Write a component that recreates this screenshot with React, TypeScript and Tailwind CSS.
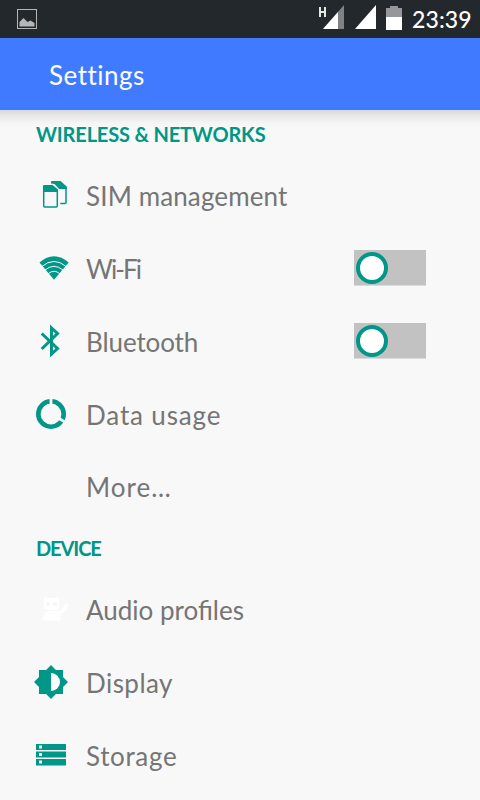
import type { ReactNode } from 'react';

function SimIcon() {
  return (
    <svg className="overflow-visible" width="32" height="36" viewBox="0 0 32 36" fill="none">
      <path d="M7.700 9V29q0 1 1 1H20.300q1 0 1-1V13" stroke="#009688" strokeWidth="1.500" />
      <path d="M7 9q0-1 1-1h8.500L22 12.500V15H7Z" fill="#009688" />
      <path d="M15 6.500V5q0-1 1-1h8.500L30.700 9.500V12h-7.500L18.500 7Z" fill="#009688" />
      <path d="M30 10V25.500q0 1-1 1H24.300" stroke="#009688" strokeWidth="1.500" />
    </svg>
  );
}

function WifiIcon() {
  return (
    <svg className="overflow-visible" width="32" height="36" viewBox="0 0 32 36">
      <path d="M3.500 12.600Q18 0 32.700 12.600L18 29.700Z" fill="#009688" />
      <path d="M5.700 16.600Q18 6.300 30.300 16.600M8.700 20.300Q18 12.300 27.300 20.300M12 23.900Q18 18.600 24 23.900" fill="none" stroke="#f8f8f8" strokeWidth="1" />
    </svg>
  );
}

function BluetoothIcon() {
  return (
    <svg className="overflow-visible" width="32" height="36" viewBox="0 0 32 36" fill="none" stroke="#009688" strokeWidth="3">
      <path d="M5.700 10.500L21.500 25.500L15.500 31V5L21.500 10.500L5.700 26" />
    </svg>
  );
}

function DataIcon() {
  return (
    <svg className="overflow-visible" width="32" height="36" viewBox="0 0 32 36" fill="none">
      <circle cx="15" cy="18" r="12.700" stroke="#009688" strokeWidth="4.600" />
      <path d="M15 18V2M15 18L30 26.500" stroke="#f8f8f8" strokeWidth="2.800" />
    </svg>
  );
}

function CatIcon() {
  return (
    <svg className="overflow-visible" width="32" height="36" viewBox="0 0 32 36">
      <path d="M9 5l3 2h7l3-2 1 4v6q0 4-4 4h-7q-4 0-4-4V9Z" fill="#fff" />
      <path d="M10 20h11q6-1 8.500-8l2.500 1q-1 8-8 11l1 5.500H6l2-5Z" fill="#fff" />
      <circle cx="12" cy="13" r="2" fill="#f6f6f6" />
      <circle cx="19" cy="13" r="2" fill="#f6f6f6" />
    </svg>
  );
}

function DisplayIcon() {
  return (
    <svg width="36" height="36" viewBox="0 0 36 36" className="-ml-0.5">
      <path d="M17 1l4.900 5H29v7.100L34 18l-5 4.900V30h-7.100L17 35l-4.900-5H5v-7.100L0 18l5-4.900V6h7.100Z" fill="#009688" />
      <path d="M17 9a9 9 0 0 1 0 18Z" fill="#fff" />
    </svg>
  );
}

function StorageIcon() {
  return (
    <svg width="32" height="36" viewBox="0 0 32 36">
      <path d="M0 7h30v6H0ZM0 14.500h30v6H0ZM0 22h30v6.500H0Z" fill="#009688" />
      <path d="M3 8.500h3v3H3ZM3 16h3v3H3ZM3 23.500h3v3H3Z" fill="#fff" />
    </svg>
  );
}

function Toggle() {
  return (
    <div className="mr-[54px] ml-auto flex h-9 w-[72px] items-start border-b border-[#dadada] bg-[#c2c2c2] pt-[2px] pl-[2px]">
      <div className="size-8 rounded-full border-4 border-[#009688] bg-white" />
    </div>
  );
}

function Row({ icon, label, className, toggle }: { icon?: ReactNode; label: string; className: string; toggle?: boolean }) {
  return (
    <div className="flex h-[73px] shrink-0 items-center pb-px pl-9">
      <div className="flex w-[50px] shrink-0">{icon}</div>
      <span className={`text-[26px] leading-8 whitespace-nowrap text-[#757575] ${className}`}>{label}</span>
      {toggle && <Toggle />}
    </div>
  );
}

function Heading({ label, className }: { label: string; className: string }) {
  return (
    <div className="flex h-[49px] shrink-0 items-center pb-px pl-9">
      <h2 className={`text-[20px] font-bold whitespace-nowrap text-[#009688] ${className}`}>{label}</h2>
    </div>
  );
}

export default function App() {
  return (
    <div className="flex h-[800px] w-[480px] flex-col overflow-hidden bg-[#f8f8f8] font-[Lato,sans-serif]">
      <div className="flex h-[38px] shrink-0 items-center bg-[#23282c] pl-[17px]">
        <svg width="20" height="20" viewBox="0 0 20 20">
          <rect x=".5" y=".5" width="19" height="19" fill="none" stroke="#b4b6b7" />
          <path d="M2.500 17.500V13L6.500 9l4 4 3-1.500 4 2.500v3.500Z" fill="#b4b6b7" />
        </svg>
        <svg className="ml-[281px]" width="86" height="38" viewBox="318 0 86 38">
          <path d="M320 7v10M325 7v10M320 12h5" stroke="#e4e5e5" strokeWidth="2" />
          <path d="M344 5V29H323Z" fill="#808386" />
          <path d="M338 11.900V29H323Z" fill="#fff" />
          <path d="M376 5V29H355Z" fill="#fff" />
          <path d="M390 6h8v2h4v22h-16V8h4Z" fill="#96979a" />
          <path d="M386 17h16v13h-16Z" fill="#fff" />
        </svg>
        <span className="ml-2 text-[23px] leading-8 font-medium tracking-[0.100px] whitespace-nowrap text-white">23:39</span>
      </div>
      <header className="flex h-[72px] shrink-0 items-center bg-[#407bff] pt-[2px] pl-[49px]">
        <h1 className="text-[26px] leading-8 tracking-[0.500px] text-white">Settings</h1>
      </header>
      <main className="flex flex-col bg-[linear-gradient(to_bottom,#d8d8d8_0,#e9e9e9_6px,#f5f5f5_13px,#f8f8f8_18px)]">
        <Heading label="WIRELESS & NETWORKS" className="tracking-[-0.170px]" />
        <Row icon={<SimIcon />} label="SIM management" className="pt-[2px] tracking-[0.120px]" />
        <Row icon={<WifiIcon />} label="Wi-Fi" className="pt-[2px] tracking-[-1.900px]" toggle />
        <Row icon={<BluetoothIcon />} label="Bluetooth" className="pt-[2px] tracking-[-0.100px]" toggle />
        <Row icon={<DataIcon />} label="Data usage" className="pt-[2px] tracking-[0.850px]" />
        <Row label="More…" className="tracking-[1px]" />
        <Heading label="DEVICE" className="tracking-[-1.100px]" />
        <Row icon={<CatIcon />} label="Audio profiles" className="pt-[2px] tracking-[0px]" />
        <Row icon={<DisplayIcon />} label="Display" className="pt-[2px] tracking-[0.450px]" />
        <Row icon={<StorageIcon />} label="Storage" className="pt-[2px] tracking-[0.650px]" />
      </main>
    </div>
  );
}
